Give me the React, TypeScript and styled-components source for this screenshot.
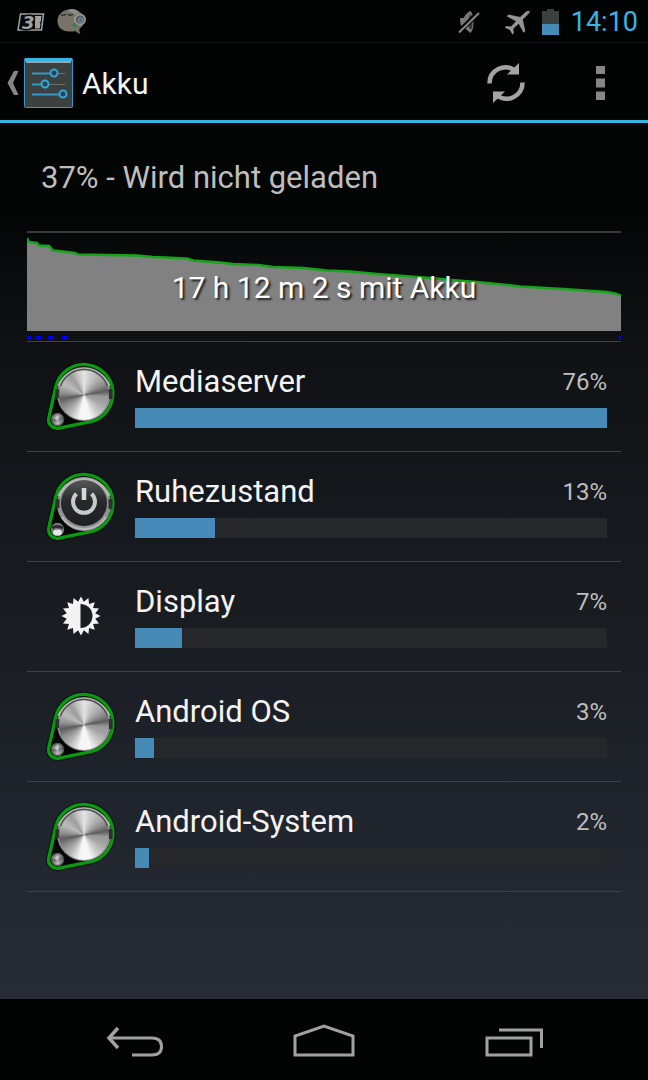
import React from "react";
import styled, { createGlobalStyle } from "styled-components";

const GlobalStyle = createGlobalStyle`
  *, *::before, *::after { box-sizing: border-box; }
  body {
    margin: 0;
    background: #020404;
    color: #f3f3f3;
    font-family: Roboto, "Noto Sans", sans-serif;
  }
  button { font: inherit; color: inherit; }
  h1, h2, p, ul { margin: 0; padding: 0; font-weight: 400; }
`;

const Screen = styled.div`
  display: flex;
  flex-direction: column;
  min-height: 100vh;
  background: linear-gradient(#020404 0, #040606 20%, #101215 33%, #191d22 58%, #272b36 92%);
`;

const StatusBar = styled.header`
  display: flex;
  align-items: center;
  justify-content: space-between;
  height: 43px;
  padding: 2px 10px 0 17px;
  background: #020404;
  border-bottom: 1px solid #101213;
`;

const StatusGroup = styled.div<{ $gap: number }>`
  display: flex;
  align-items: center;
  gap: ${(p) => p.$gap}px;
`;

const Clock = styled.time`
  color: #33b5e5;
  font-size: 27px;
  line-height: 32px;
`;

const ActionBar = styled.div`
  display: flex;
  align-items: center;
  height: 80px;
  padding: 2px 24px 0 7px;
  border-bottom: 3px solid #33b5e5;
  background: #020404;
`;

const IconButton = styled.button`
  display: flex;
  align-items: center;
  justify-content: center;
  padding: 0;
  border: 0;
  background: none;
  cursor: pointer;
`;

const UpButton = styled(IconButton)`
  gap: 5px;
`;

const ActionButton = styled(IconButton)`
  width: 48px;
  height: 64px;
`;

const Title = styled.h1`
  flex: 1;
  padding: 2px 0 0 9px;
  font-size: 30px;
  line-height: 36px;
`;

const Actions = styled.div`
  display: flex;
  gap: 46px;
`;

const Content = styled.main`
  flex: 1;
  padding: 0 27px;
`;

const Summary = styled.h2`
  padding: 37px 14px 35px;
  font-size: 31px;
  line-height: 36px;
  color: #bebebe;
`;

const History = styled.section`
  position: relative;
  height: 110px;
  border-top: 2px solid #38393b;
`;

const HistoryChart = styled.svg`
  display: block;
  width: 100%;
  height: 108px;
`;

const HistoryLabel = styled.p`
  position: absolute;
  inset: 37px 0 auto;
  text-align: center;
  font-size: 30px;
  line-height: 36px;
  color: #fff;
  text-shadow: 2px 2px 2px #222;
`;

const UsageList = styled.ul`
  list-style: none;
  border-top: 1px solid #3d4143;
`;

const UsageRow = styled.li`
  display: flex;
  align-items: center;
  gap: 18px;
  height: 110px;
  padding: 0 14px 2px 18px;
  border-bottom: 1px solid #3d4143;
`;

const UsageBody = styled.div`
  flex: 1;
`;

const UsageHead = styled.div`
  display: flex;
  align-items: center;
  justify-content: space-between;
  margin-bottom: 8px;
`;

const UsageName = styled.span`
  font-size: 31px;
  line-height: 36px;
`;

const UsagePercent = styled.span`
  font-size: 24px;
  line-height: 36px;
  color: #bebebe;
`;

const Track = styled.div`
  height: 20px;
  background: #26272b;
`;

const Fill = styled.div`
  height: 100%;
  background: #468bb8;
`;

const IconBox = styled.div`
  position: relative;
  display: grid;
  place-items: center;
  width: 72px;
  height: 72px;
`;

const Disc = styled.div<{ $left: number; $top: number; $size: number }>`
  position: absolute;
  left: ${(p) => p.$left}px;
  top: ${(p) => p.$top}px;
  width: ${(p) => p.$size}px;
  height: ${(p) => p.$size}px;
  border-radius: 50%;
  background: conic-gradient(
    #e4e4e4 0deg, #cfcfcf 15deg, #b0b0b0 40deg, #8d8d8d 62deg, #5c5c5c 80deg, #989898 94deg,
    #a4a4a4 115deg, #cfcfcf 145deg, #f6f6f6 165deg, #f6f6f6 190deg, #b5b5b5 218deg,
    #8c8c8c 242deg, #5c5c5c 260deg, #8f8f8f 275deg, #bcbcbc 298deg, #9c9c9c 325deg,
    #c8c8c8 345deg, #e4e4e4 360deg
  );
`;

const Overlay = styled.svg`
  position: absolute;
  inset: 0;
`;

const NavBar = styled.nav`
  display: flex;
  align-items: center;
  justify-content: space-between;
  height: 81px;
  padding: 4px 101px 0;
  background: #020404;
`;

const NavButton = styled(IconButton)`
  width: 64px;
  height: 56px;
`;

function Knob({ power = false }: { power?: boolean }) {
  return (
    <IconBox aria-hidden="true">
      <Overlay width="72" height="72" viewBox="0 0 72 72">
        <path
          d="M10.7 27.2A29 29 0 1 1 44.8 61.9L14 68.2A8.7 8.7 0 0 1 3.8 57.8Z"
          fill="#050706"
          stroke="#000"
          strokeOpacity=".35"
          strokeWidth="6"
        />
        <path
          d="M10.7 27.2A29 29 0 1 1 44.8 61.9L14 68.2A8.7 8.7 0 0 1 3.8 57.8Z"
          fill="#050706"
          stroke="#0a9a10"
          strokeWidth="3.3"
        />
        <circle cx="39" cy="34" r="27" fill={power ? "#929292" : "#8b8b8b"} />
        <path d="M14 26A27 27 0 0 1 64 26" fill="none" stroke="#b4b4b4" strokeWidth="3" />
        <path d="M12.5 29v9M65.5 29v10" stroke="#2d3030" strokeWidth="4" />
      </Overlay>
      {!power && <Disc $left={14} $top={10} $size={50} />}
      <Disc $left={6} $top={53} $size={13} />
      <Overlay width="72" height="72" viewBox="0 0 72 72">
        {power ? (
          <>
            <defs>
              <linearGradient id="cap" x1="0" y1="0" x2="0" y2="1">
                <stop offset="0" stopColor="#555858" />
                <stop offset=".45" stopColor="#27292b" />
                <stop offset="1" stopColor="#1d2024" />
              </linearGradient>
            </defs>
            <path d="M17 47A26 26 0 0 0 61 47" fill="none" stroke="#b9b9b9" strokeWidth="2" />
            <circle cx="39" cy="33" r="23" fill="url(#cap)" />
            <path
              d="M31.5 23.8A11 11 0 1 0 46.5 23.8"
              fill="none"
              stroke="#c9c9c9"
              strokeWidth="4"
            />
            <path d="M39 18v12" stroke="#d8d8d8" strokeWidth="4.5" />
            <circle cx="12.5" cy="59.5" r="6.500" fill="#777" />
            <path d="M7 58q5-3 11 0" fill="none" stroke="#2c2c2c" strokeWidth="3" />
            <ellipse cx="12.5" cy="62.500" rx="4.500" ry="3" fill="#e6e6e6" />
          </>
        ) : (
          <>
            <path d="M15.500 26A25 25 0 0 1 62.500 26" fill="none" stroke="#4f5050" strokeWidth="1.500" />
            <circle cx="12.5" cy="59.5" r="6.500" fill="#666" fillOpacity=".45" />
            <circle cx="12.5" cy="59.5" r="6" fill="none" stroke="#444" strokeWidth="1.500" strokeOpacity=".7" />
            <circle cx="12" cy="58" r="2" fill="#ddd" fillOpacity=".7" />
          </>
        )}
      </Overlay>
    </IconBox>
  );
}

const sunPoints = Array.from({ length: 32 }, (_, i) => {
  const r = i % 2 ? 14.5 : 19.5;
  const a = (i * Math.PI) / 16;
  return `${(36 + r * Math.sin(a)).toFixed(2)},${(36 - r * Math.cos(a)).toFixed(2)}`;
}).join(" ");

function Brightness() {
  return (
    <IconBox aria-hidden="true">
      <svg width="72" height="72" viewBox="0 0 72 72">
        <polygon points={sunPoints} fill="#f3f3f3" />
        <path d="M35.5 24A12 12 0 0 1 35.5 48Z" fill="#1a1e22" />
      </svg>
    </IconBox>
  );
}

const usage = [
  { name: "Mediaserver", percent: 76, bar: 100, icon: <Knob /> },
  { name: "Ruhezustand", percent: 13, bar: 17, icon: <Knob power /> },
  { name: "Display", percent: 7, bar: 10, icon: <Brightness /> },
  { name: "Android OS", percent: 3, bar: 4, icon: <Knob /> },
  { name: "Android-System", percent: 2, bar: 3, icon: <Knob /> },
];

const level =
  "0,5 2,9 10,10 12,12.5 22,13 26,17.5 36,18.5 48,20 51,21.5 110,22.5 126,24 160,25.5 166,27.5 193,29.5 206,31 231,32 246,34 276,35 300,37.5 323,38.5 350,41 370,42.5 403,45 430,47.5 450,49 480,52 493,53.5 536,56 580,59 588,60.5 594,62.5";

export default function App() {
  return (
    <Screen>
      <GlobalStyle />
      <StatusBar>
        <StatusGroup $gap={12}>
          <svg width="28" height="20" viewBox="0 0 28 20" aria-hidden="true">
            <path d="M3.500 2H26.500L24.500 18H1Z" fill="#070909" stroke="#a0a2a2" strokeWidth="1.500" />
            <path d="M18 4h6.500l-.7 5.500-1.300 1 1 1.200-.7 4.800H18Z" fill="#a0a2a2" />
            <text
              x="5"
              y="16.500"
              fill="#a0a2a2"
              stroke="#070909"
              strokeWidth="3"
              paintOrder="stroke"
              fontFamily="DejaVu Sans"
              fontWeight="700"
              fontStyle="italic"
              fontSize="18"
            >
              3
            </text>
          </svg>
          <svg width="30" height="28" viewBox="0 0 30 28" aria-hidden="true">
            <path
              d="M11 1.500C4 3 0 8 .5 14c.5 6 5 9 11 9.500 3 .2 5-.1 6.500-.5 2 1.500 4 2.700 5.500 2.800-1.500-2-1.500-4-.5-5.500 3-2 4.500-5 4-9C26 4 18-.5 11 1.500Z"
              fill="#77736a"
            />
            <path d="M11 2.500Q16-1 22 4L18 7Q15 4 11 2.500Z" fill="#8d8d88" />
            <path d="M4 6.500q3 1.500 5-.5M11 6.500q3 1.500 5-.5" fill="none" stroke="#34332f" strokeWidth="1.500" />
            <circle cx="23" cy="11.500" r="5" fill="#555b5b" stroke="#95968f" strokeWidth="2" />
            <circle cx="23.500" cy="12" r="2.200" fill="#3a6e93" stroke="#8b9193" />
            <circle cx="17.500" cy="17" r="2" fill="#258a3a" />
          </svg>
        </StatusGroup>
        <StatusGroup $gap={12}>
          <svg width="24" height="26" viewBox="0 0 24 26" aria-hidden="true">
            <path d="M2 9h3.500Q9 3 12.500 2q3 3 3 11t-3 11Q9 22 5.500 17H3q-1-4-1-8Z" fill="#777a79" />
            <ellipse cx="12.500" cy="13" rx="2" ry="7.500" fill="#303433" />
            <path d="M0 23.500 20.500 4" stroke="#020404" strokeWidth="5" />
            <path d="M1 23.500 21 4" stroke="#868988" strokeWidth="2" />
          </svg>
          <svg width="36" height="26" viewBox="0 0 36 26" aria-hidden="true">
            <path
              d="M35.500 2c-.8-.8-3.200.2-4.500 1.400L26.200 8 14.500 5.600 12.800 7.300l9.200 4.900-5 5.300-4.700-.5-1.500 1.500 5 2.400 2.600 4.600 1.500-1.500-.6-4.300 5.400-4.900 4.900 9 1.700-1.700-2.500-11.600 4.800-4.700c1.300-1.300 2.700-3 1.900-3.800Z"
              fill="#929494"
            />
          </svg>
          <StatusGroup $gap={12}>
            <svg width="17" height="26" viewBox="0 0 17 26" aria-hidden="true">
              <path d="M5 0h7v2h5v13H0V2h5Z" fill="#3a4040" />
              <path d="M0 15h17v11H0Z" fill="#468bb8" />
            </svg>
            <Clock>14:10</Clock>
          </StatusGroup>
        </StatusGroup>
      </StatusBar>

      <ActionBar>
        <UpButton aria-label="Nach oben">
          <svg width="12" height="26" viewBox="0 0 12 26" aria-hidden="true">
            <path d="M7 1h4.500L6 13l5.500 12H7L.5 13Z" fill="#858787" />
          </svg>
          <svg width="49" height="50" viewBox="0 0 49 50" aria-hidden="true">
            <rect x=".5" y=".5" width="48" height="49" rx="1" fill="#3b4040" stroke="#3796c4" />
            <path d="M1 1.500h47" stroke="#33b5e5" strokeWidth="3" />
            <path d="M2 4h45" stroke="#9aa4a8" strokeWidth="2" />
            <path d="M29 15.500h12M20 26.500h21M38 36.500h3" stroke="#6c6f68" />
            <path d="M8 15.500h18M8 26.500h10M8 36.500h27" stroke="#3796c4" strokeWidth="2" />
            <g fill="#2c4450" stroke="#33a5d8" strokeWidth="2">
              <circle cx="30" cy="15" r="3.500" />
              <circle cx="21" cy="26" r="3.500" />
              <circle cx="39" cy="36" r="3.500" />
            </g>
          </svg>
        </UpButton>
        <Title>Akku</Title>
        <Actions>
          <ActionButton aria-label="Aktualisieren">
            <svg width="40" height="40" viewBox="0 0 40 40" aria-hidden="true">
              <g id="refresh-half">
                <path d="M3.500 20.500A16 16 0 0 1 29 7.500" fill="none" stroke="#a2a3a3" strokeWidth="4.500" />
                <path d="M33 0v11.500H21Z" fill="#a2a3a3" />
              </g>
              <use href="#refresh-half" transform="rotate(180 20 20)" />
            </svg>
          </ActionButton>
          <ActionButton aria-label="Weitere Optionen">
            <svg width="9" height="34" viewBox="0 0 9 34" aria-hidden="true">
              <path d="M0 0h9v8H0ZM0 12.500h9v9H0ZM0 25.500h9v8.500H0Z" fill="#858787" />
            </svg>
          </ActionButton>
        </Actions>
      </ActionBar>

      <Content>
        <Summary>37% - Wird nicht geladen</Summary>
        <History>
          <HistoryChart viewBox="0 0 594 108" preserveAspectRatio="none" aria-hidden="true">
            <polygon points={`${level} 594,98 0,98`} fill="#808180" />
            <polyline points={level} fill="none" stroke="#16a51a" strokeWidth="2.500" />
            <path d="M0 103h4v3.500H0ZM9 103h5v3.500H9ZM21 103h6v3.500h-6ZM35 103h6v3.500h-6ZM592 103h2v3.500h-2Z" fill="#0000f5" />
          </HistoryChart>
          <HistoryLabel>17 h 12 m 2 s mit Akku</HistoryLabel>
        </History>
        <UsageList>
          {usage.map((item) => (
            <UsageRow key={item.name}>
              {item.icon}
              <UsageBody>
                <UsageHead>
                  <UsageName>{item.name}</UsageName>
                  <UsagePercent>{item.percent}%</UsagePercent>
                </UsageHead>
                <Track>
                  <Fill style={{ width: `${item.bar}%` }} />
                </Track>
              </UsageBody>
            </UsageRow>
          ))}
        </UsageList>
      </Content>

      <NavBar>
        <NavButton aria-label="Zurück">
          <svg width="64" height="56" viewBox="0 0 64 56" fill="none" stroke="#a0a1a1" strokeWidth="3" aria-hidden="true">
            <path d="M8 24H51Q60.500 24 60.500 32.500T51 41H31" />
            <path d="M17 14 8 24 17 34" strokeWidth="3.500" />
          </svg>
        </NavButton>
        <NavButton aria-label="Startbildschirm">
          <svg width="64" height="56" viewBox="0 0 64 56" fill="none" stroke="#a0a1a1" strokeWidth="3" aria-hidden="true">
            <path d="M3 41V22L32 12 61 22V41Z" />
          </svg>
        </NavButton>
        <NavButton aria-label="Letzte Apps">
          <svg width="64" height="56" viewBox="0 0 64 56" fill="none" stroke="#a0a1a1" strokeWidth="3" aria-hidden="true">
            <path d="M4 24H48V41H4ZM16 16H58.500V34" />
          </svg>
        </NavButton>
      </NavBar>
    </Screen>
  );
}
